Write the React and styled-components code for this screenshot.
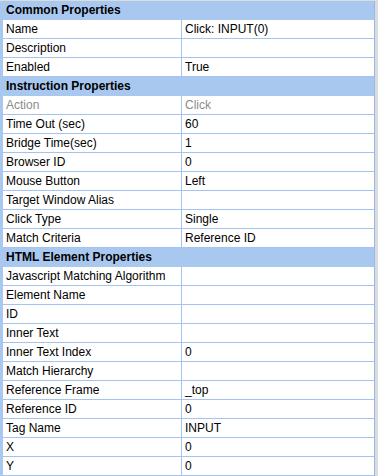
import styled, { createGlobalStyle } from 'styled-components';

const sections = [
    {
        title: 'Common Properties',
        rows: [
            ['Name', 'Click: INPUT(0)'],
            ['Description', ''],
            ['Enabled', 'True'],
        ],
    },
    {
        title: 'Instruction Properties',
        rows: [
            ['Action', 'Click', true],
            ['Time Out (sec)', '60'],
            ['Bridge Time(sec)', '1'],
            ['Browser ID', '0'],
            ['Mouse Button', 'Left'],
            ['Target Window Alias', ''],
            ['Click Type', 'Single'],
            ['Match Criteria', 'Reference ID'],
        ],
    },
    {
        title: 'HTML Element Properties',
        rows: [
            ['Javascript Matching Algorithm', ''],
            ['Element Name', ''],
            ['ID', ''],
            ['Inner Text', ''],
            ['Inner Text Index', '0'],
            ['Match Hierarchy', ''],
            ['Reference Frame', '_top'],
            ['Reference ID', '0'],
            ['Tag Name', 'INPUT'],
            ['X', '0'],
            ['Y', '0'],
        ],
    },
];

const App = () => {
    return (
        <>
            <GlobalStyle />
            <Frame>
                <Grid>
                    {sections.map((s) => (
                        <div key={s.title}>
                            <Header>{s.title}</Header>
                            {s.rows.map(([name, value, disabled]) => (
                                <Row key={name}>
                                    <NameCell $disabled={disabled}>{name}</NameCell>
                                    <ValueCell $disabled={disabled}>{value}</ValueCell>
                                </Row>
                            ))}
                        </div>
                    ))}
                </Grid>
            </Frame>
        </>
    );
};

const GlobalStyle = createGlobalStyle`
    body {
        margin: 0;
        font-family: "Liberation Sans", Arial, sans-serif;
        font-size: 12px;
        background: #dcdcdc;
    }
`;

const Frame = styled.div`
    width: 378px;
    height: 476px;
    box-sizing: border-box;
    padding: 1px 3px 0 0;
    background: #dcdcdc;
    overflow: hidden;
`;

const Grid = styled.div`
    background: #ffffff;
    border-left: 3px solid #a9c8ef;
    border-right: 1px solid #94b8ee;
`;

const Header = styled.div`
    height: 19px;
    line-height: 19px;
    margin-left: -3px;
    padding-left: 6px;
    background: #a9c8ef;
    font-weight: bold;
    color: #000;
`;

const Row = styled.div`
    display: grid;
    grid-template-columns: 179px 1fr;
    height: 18px;
    border-bottom: 1px solid #a3c3f0;
`;

const Cell = styled.div`
    line-height: 18px;
    white-space: nowrap;
    overflow: hidden;
    color: ${(p) => (p.$disabled ? '#8c8c8c' : '#000')};
`;

const NameCell = styled(Cell)`
    padding-left: 3px;
    border-right: 1px solid #a3c3f0;
`;

const ValueCell = styled(Cell)`
    padding-left: 3px;
`;

export default App;
